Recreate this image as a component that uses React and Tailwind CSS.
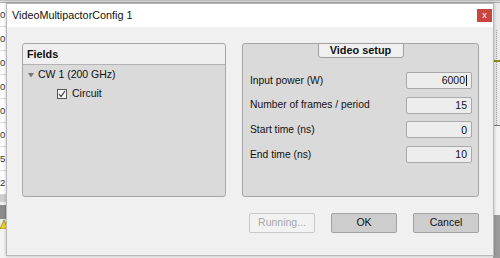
import React from 'react'

const font = { fontFamily: '"Liberation Sans", Arial, sans-serif' }

const rows = [
  { label: 'Input power (W)', value: '6000', caret: true },
  { label: 'Number of frames / period', value: '15' },
  { label: 'Start time (ns)', value: '0' },
  { label: 'End time (ns)', value: '10' },
]

function LeftStrip() {
  const digits = ['0', '0', '0', '0', '0', '0', '5', '2']
  return (
    <div className="w-[6px] h-full flex flex-col bg-white overflow-hidden">
      <div className="h-[3px] shrink-0" />
      {digits.map((d, i) => (
        <div key={i} className="h-[24px] shrink-0 border-b border-[#d8d8d8] flex items-center">
          <span className="text-[9.5px] text-[#333] leading-none">{d}</span>
        </div>
      ))}
      <div className="h-[7px] shrink-0 bg-[#cfcfcf]" />
      <div className="h-[3px] shrink-0 bg-[#f0f0f0]" />
      <div className="h-[14px] shrink-0 bg-[#8c8c8c]" />
      <div className="h-[10px] shrink-0 bg-[#e9e9e9] flex items-end">
        <svg width="6" height="9" viewBox="0 0 6 9">
          <polygon points="4,0 8,9 0,9" fill="#f2d21b" stroke="#7a6a00" strokeWidth="0.6" />
        </svg>
      </div>
      <div className="flex-1 bg-[#f4f4f4]" />
    </div>
  )
}

function RightStrip() {
  return (
    <div className="w-[7px] h-full flex flex-col bg-[#eaeaea]">
      <div className="h-[30px] shrink-0" />
      <div className="h-[95px] shrink-0 flex justify-center relative">
        <div className="w-0 h-full border-l border-dotted border-[#9a9a9a]" />
        <div className="absolute left-0 top-[30px] w-[7px] h-[2px] bg-[#8a8a20]" />
      </div>
      <div className="h-[1px] shrink-0 bg-[#777]" />
      <div className="h-[89px] shrink-0 bg-[#f2f2f2]" />
      <div className="flex-1 bg-[#9c9c9c]" />
    </div>
  )
}

export default function App() {
  return (
    <div className="w-[500px] h-[258px] relative overflow-hidden bg-[#f2f2f2] flex justify-between" style={font}>
      <LeftStrip />
      <RightStrip />
      <div className="absolute left-0 right-0 top-0 h-[3px] flex flex-col">
        <div className="h-[1px] bg-[#bdbdbd]" />
        <div className="h-[1px] bg-[#e0e0e0]" />
        <div className="h-[1px] bg-[#a9a9a9]" />
      </div>

      {/* dialog window */}
      <div className="absolute left-[6px] top-[3px] w-[488px] h-[253px] border border-[#b9b9b9] bg-[#f0f0f0] flex flex-col shadow-[0_0_3px_rgba(0,0,0,0.25)]">
        <div className="h-[23px] shrink-0 bg-white flex items-center justify-between pl-[5px] pr-[1px]">
          <span className="text-[10.8px] text-[#111]">VideoMultipactorConfig 1</span>
          <div className="w-[15px] h-[13px] bg-[#c9453f] flex items-center justify-center text-white text-[9px] leading-none pb-[1px]">
            x
          </div>
        </div>

        <div className="flex-1 flex flex-col pl-[15px] pr-[14px] pt-[16px]">
          <div className="flex gap-[16px] h-[154px]">
            {/* Fields */}
            <div className="w-[204px] h-full border border-[#a6a6a6] rounded-[3px] bg-[#dadada] flex flex-col overflow-hidden">
              <div className="h-[21px] shrink-0 bg-[#efefef] border-b border-[#b4b4b4] flex items-center pl-[4px]">
                <span className="text-[10.8px] font-bold text-[#111]">Fields</span>
              </div>
              <div className="flex flex-col pt-[1px]">
                <div className="h-[18px] flex items-center pl-[5px] gap-[4px]">
                  <svg width="6" height="5" viewBox="0 0 6 5">
                    <polygon points="0,0 6,0 3,4.5" fill="#777" />
                  </svg>
                  <span className="text-[10.5px] text-[#111]">CW 1 (200 GHz)</span>
                </div>
                <div className="h-[20px] flex items-center pl-[34px] gap-[5px]">
                  <div className="w-[10px] h-[10px] border border-[#555] bg-[#f4f4f4] flex items-center justify-center">
                    <svg width="8" height="8" viewBox="0 0 8 8">
                      <polyline points="1,4 3,6.5 7,1" fill="none" stroke="#333" strokeWidth="1.1" />
                    </svg>
                  </div>
                  <span className="text-[10.5px] text-[#111]">Circuit</span>
                </div>
              </div>
            </div>

            {/* Video setup */}
            <div className="flex-1 h-full border border-[#a6a6a6] rounded-[3px] bg-[#dadada] flex flex-col">
              <div className="flex justify-center mt-[-1px]">
                <div className="w-[86px] h-[15px] bg-[#f0f0f0] border border-[#a0a0a0] rounded-b-[3px] flex items-center justify-center">
                  <span className="text-[10.9px] font-bold text-[#111] leading-none">Video setup</span>
                </div>
              </div>
              <div className="flex flex-col gap-[7.7px] pt-[14px] pl-[7px] pr-[6px]">
                {rows.map((r) => (
                  <div key={r.label} className="h-[17px] flex items-center justify-between">
                    <span className="text-[10.3px] text-[#111]">{r.label}</span>
                    <div className="w-[66px] h-[17px] border border-[#a9a9a9] rounded-[2px] bg-[#ededed] flex items-center justify-end pr-[4px]">
                      <span className="text-[10.5px] text-[#111] leading-none">{r.value}</span>
                      {r.caret && <span className="w-[1px] h-[11px] bg-[#111] ml-[1px]" />}
                    </div>
                  </div>
                ))}
              </div>
            </div>
          </div>

          <div className="flex justify-end gap-[16px] mt-[16px]">
            <div className="w-[66px] h-[20px] border border-[#c8c8c8] rounded-[2px] bg-[#f2f2f2] flex items-center justify-center">
              <span className="text-[10.5px] text-[#a8a8a8]">Running...</span>
            </div>
            <div className="w-[66px] h-[20px] border border-[#a2a2a2] rounded-[2px] bg-[#cdcdcd] flex items-center justify-center">
              <span className="text-[10.5px] text-[#111]">OK</span>
            </div>
            <div className="w-[66px] h-[20px] border border-[#a2a2a2] rounded-[2px] bg-[#cdcdcd] flex items-center justify-center">
              <span className="text-[10.5px] text-[#111]">Cancel</span>
            </div>
          </div>
        </div>
      </div>
    </div>
  )
}
